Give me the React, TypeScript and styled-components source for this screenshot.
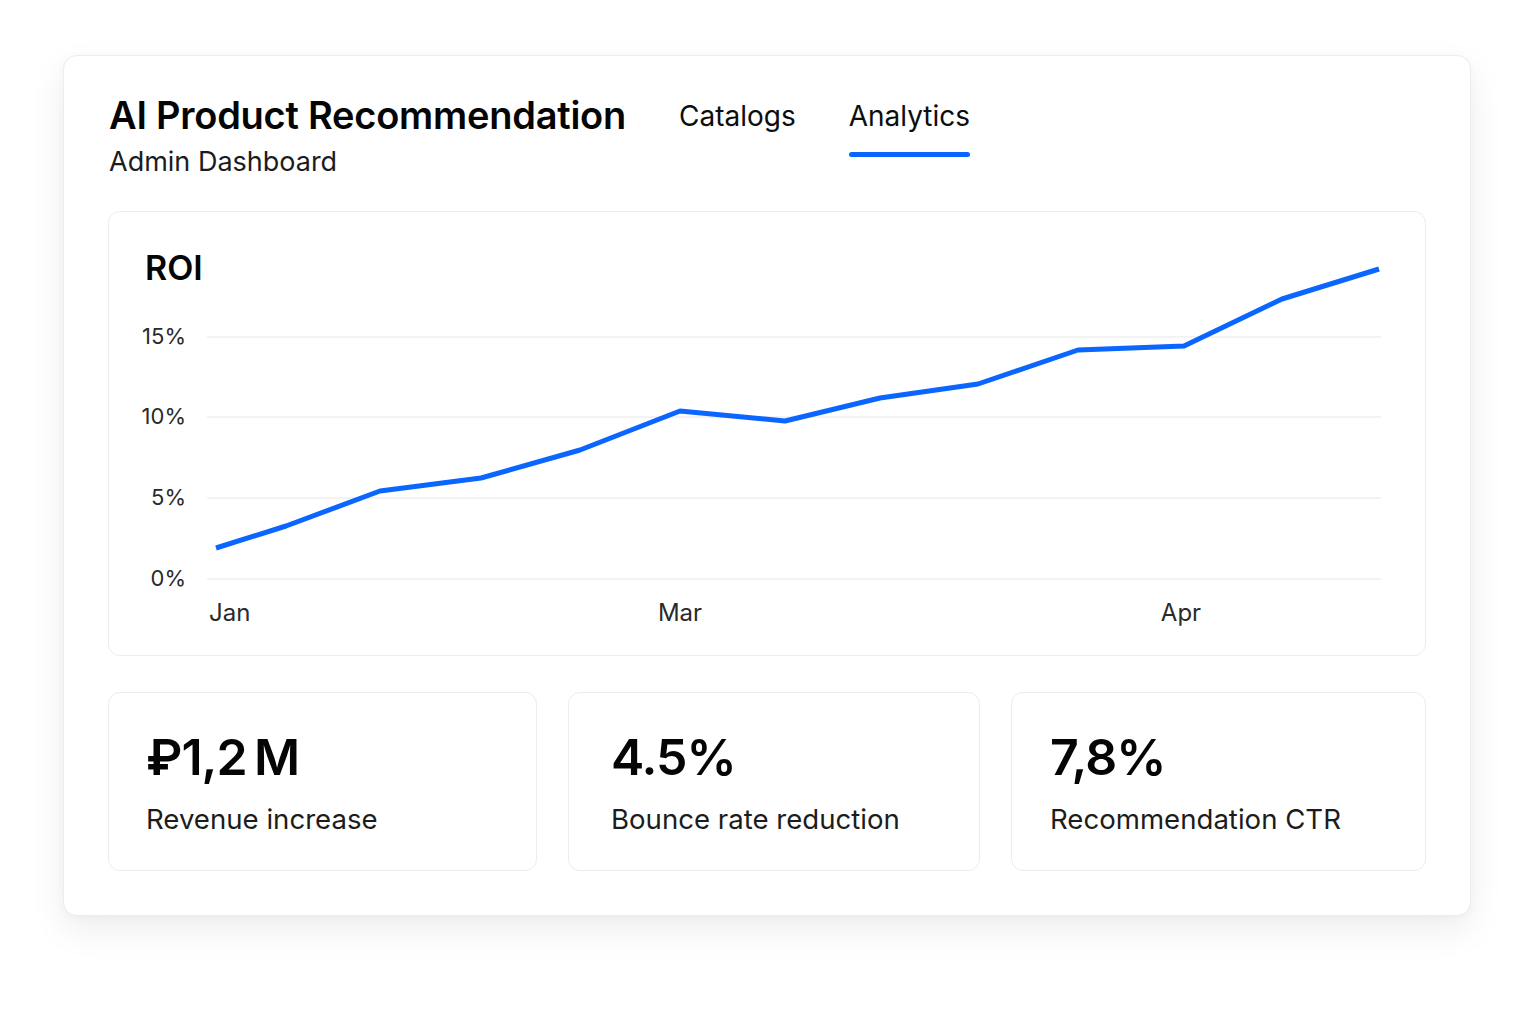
import React from "react";
import styled, { createGlobalStyle } from "styled-components";

const GlobalStyle = createGlobalStyle`
  html, body { margin: 0; padding: 0; background: #ffffff; }
  body { font-family: Inter, "Noto Sans", "Liberation Sans", sans-serif; color: #0b0b0b; }
  * { box-sizing: border-box; }
`;

const Page = styled.div`
  width: 1536px;
  height: 1024px;
  padding: 55px 0 0 63px;
`;

const Panel = styled.div`
  width: 1408px;
  height: 861px;
  background: #ffffff;
  border: 1px solid #ededed;
  border-radius: 14px;
  box-shadow: 0 14px 36px rgba(0, 0, 0, 0.07), 0 2px 8px rgba(0, 0, 0, 0.03);
  padding: 37px 44px 0 44px;
  display: flex;
  flex-direction: column;
`;

const Header = styled.header`
  display: flex;
  align-items: flex-start;
  gap: 53px;
`;

const TitleBlock = styled.div`
  display: flex;
  flex-direction: column;
  gap: 7px;
  padding-left: 1px;
`;

const Title = styled.h1`
  margin: 0;
  font-size: 38px;
  line-height: 45px;
  font-weight: 600;
  letter-spacing: -0.25px;
  color: #050505;
`;

const Subtitle = styled.div`
  font-size: 27px;
  line-height: 34px;
  font-weight: 400;
  color: #1c1c1c;
`;

const Tabs = styled.nav`
  display: flex;
  gap: 53px;
  padding-top: 5px;
`;

const Tab = styled.div<{ $active?: boolean }>`
  display: flex;
  flex-direction: column;
  gap: 18px;
  font-size: 28px;
  line-height: 36px;
  color: #0d0d0d;
  &::after {
    content: "";
    display: block;
    height: 5px;
    border-radius: 3px;
    background: ${(p) => (p.$active ? "#0a66ff" : "transparent")};
  }
`;

const ChartCard = styled.section`
  margin-top: 32px;
  height: 445px;
  border: 1px solid #ececec;
  border-radius: 12px;
  padding-top: 32px;
  display: flex;
  flex-direction: column;
`;

const ChartTitle = styled.h2`
  margin: 0 0 0 36px;
  font-size: 34px;
  line-height: 48px;
  font-weight: 600;
  color: #050505;
`;

const ChartSvg = styled.svg`
  display: block;
  width: 1316px;
  height: 363px;
  overflow: visible;
  font-family: Inter, "Noto Sans", "Liberation Sans", sans-serif;
`;

const Stats = styled.div`
  margin-top: 36px;
  display: grid;
  grid-template-columns: 429fr 412fr 415fr;
  gap: 31px;
`;

const StatCard = styled.div<{ $inset: number }>`
  height: 179px;
  border: 1px solid #ececec;
  border-radius: 12px;
  padding: 34px 0 0 ${(p) => p.$inset}px;
  display: flex;
  flex-direction: column;
  gap: 15px;
`;

const StatValue = styled.div`
  font-size: 50px;
  line-height: 60px;
  font-weight: 600;
  letter-spacing: -1px;
  color: #050505;
`;

const StatLabel = styled.div`
  font-size: 27.6px;
  line-height: 34px;
  color: #1c1c1c;
`;

const grid = [
  { y: 337, label: "15%" },
  { y: 417, label: "10%" },
  { y: 498, label: "5%" },
  { y: 579, label: "0%" },
];

const months = [
  { x: 209, label: "Jan", anchor: "start" },
  { x: 680, label: "Mar", anchor: "middle" },
  { x: 1181, label: "Apr", anchor: "middle" },
];

const points: [number, number][] = [
  [216, 548],
  [286, 526],
  [380, 491],
  [481, 478],
  [580, 450],
  [680, 411],
  [785, 421],
  [880, 398],
  [978, 384],
  [1078, 350],
  [1184, 346],
  [1282, 299],
  [1379, 269],
];

const stats = [
  { value: "₽1,2\u2009M", label: "Revenue increase", inset: 37 },
  { value: "4.5%", label: "Bounce rate reduction", inset: 42 },
  { value: "7,8%", label: "Recommendation CTR", inset: 38 },
];

export default function App() {
  return (
    <>
      <GlobalStyle />
      <Page>
        <Panel>
          <Header>
            <TitleBlock>
              <Title>AI Product Recommendation</Title>
              <Subtitle>Admin Dashboard</Subtitle>
            </TitleBlock>
            <Tabs>
              <Tab>Catalogs</Tab>
              <Tab $active>Analytics</Tab>
            </Tabs>
          </Header>

          <ChartCard>
            <ChartTitle>ROI</ChartTitle>
            <ChartSvg viewBox="109 292 1316 363">
              {grid.map((g) => (
                <g key={g.label}>
                  <line x1={207} x2={1381} y1={g.y} y2={g.y} stroke="#e7e7e7" strokeWidth={1.2} />
                  <text
                    x={186}
                    y={g.y - 1}
                    textAnchor="end"
                    dominantBaseline="central"
                    fontSize={22}
                    fill="#2a2a2a"
                  >
                    {g.label}
                  </text>
                </g>
              ))}
              {months.map((m) => (
                <text key={m.label} x={m.x} y={621} textAnchor={m.anchor} fontSize={24} fill="#2a2a2a">
                  {m.label}
                </text>
              ))}
              <polyline
                points={points.map((p) => p.join(",")).join(" ")}
                fill="none"
                stroke="#0a66ff"
                strokeWidth={5}
                strokeLinejoin="round"
              />
            </ChartSvg>
          </ChartCard>

          <Stats>
            {stats.map((s) => (
              <StatCard key={s.label} $inset={s.inset}>
                <StatValue>{s.value}</StatValue>
                <StatLabel>{s.label}</StatLabel>
              </StatCard>
            ))}
          </Stats>
        </Panel>
      </Page>
    </>
  );
}
